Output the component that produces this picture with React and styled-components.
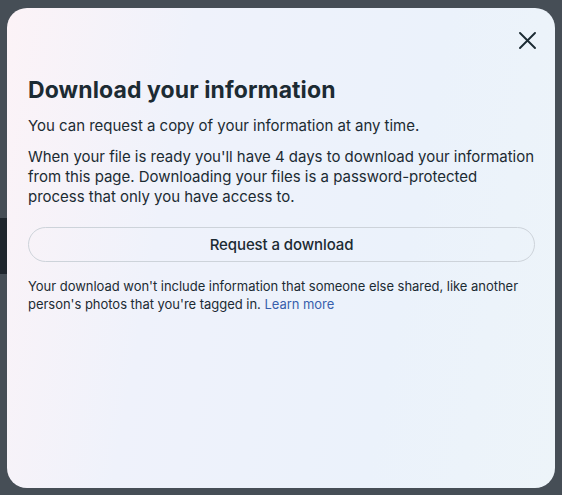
import React from "react";
import styled, { createGlobalStyle } from "styled-components";

const Global = createGlobalStyle`
  html, body { margin: 0; padding: 0; }
  body {
    background: #464e56;
    font-family: Inter, "Noto Sans", "Liberation Sans", sans-serif;
    -webkit-font-smoothing: antialiased;
  }
`;

const Page = styled.div`
  position: relative;
  width: 562px;
  height: 495px;
  box-sizing: border-box;
  padding: 8px 7px 7px 7px;
  background: #464e56;
  overflow: hidden;
`;

const Band = styled.div`
  position: absolute;
  left: 0;
  top: 218px;
  width: 12px;
  height: 56px;
  background: #1f262d;
`;

const Modal = styled.div`
  position: relative;
  box-sizing: border-box;
  height: 480px;
  border-radius: 20px;
  background: linear-gradient(100deg, #fcf3f7 0%, #eff2fb 30%, #ebf2fb 70%, #edf4f9 100%);
  padding: 20px 20px 20px 21px;
  display: flex;
  flex-direction: column;
  color: #1c2b33;
`;

const TopBar = styled.div`
  display: flex;
  justify-content: flex-end;
  height: 24px;
  margin-right: -4px;
`;

const Close = styled.button`
  width: 24px;
  height: 24px;
  border: none;
  background: none;
  padding: 0;
  display: flex;
  align-items: center;
  justify-content: center;
  color: #1c2b33;
  cursor: pointer;
`;

const Title = styled.h1`
  margin: 24px 0 0 0;
  font-size: 23px;
  line-height: 28px;
  font-weight: 700;
  letter-spacing: 0.1px;
`;

const Para = styled.p`
  margin: ${(p) => p.$mt || 0}px 0 0 0;
  font-size: 15px;
  line-height: 20px;
  font-weight: 400;
  letter-spacing: -0.02px;
`;

const Button = styled.button`
  margin-top: 20px;
  height: 35px;
  width: 100%;
  border-radius: 18px;
  border: 1px solid #cdd3da;
  background: transparent;
  font-family: inherit;
  font-size: 15px;
  font-weight: 500;
  color: #1c2b33;
  letter-spacing: -0.1px;
  cursor: pointer;
`;

const Note = styled.p`
  margin: 15px 0 0 0;
  font-size: 13px;
  line-height: 18px;
  letter-spacing: -0.03px;
  color: #1c2b33;
`;

const Link = styled.a`
  color: #385fac;
  text-decoration: none;
`;

export default function App() {
  return (
    <Page>
      <Global />
      <Band />
      <Modal>
        <TopBar>
          <Close aria-label="Close">
            <svg width="17" height="17" viewBox="0 0 17 17" fill="none">
              <path d="M1 1L16 16M16 1L1 16" stroke="currentColor" strokeWidth="1.9" strokeLinecap="round" />
            </svg>
          </Close>
        </TopBar>
        <Title>Download your information</Title>
        <Para $mt={12}>You can request a copy of your information at any time.</Para>
        <Para $mt={11}>
          When your file is ready you'll have 4 days to download your information
          from this page. Downloading your files is a password-protected process
          that only you have access to.
        </Para>
        <Button>Request a download</Button>
        <Note>
          Your download won't include information that someone else shared, like
          another person's photos that you're tagged in. <Link href="#">Learn more</Link>
        </Note>
      </Modal>
    </Page>
  );
}
